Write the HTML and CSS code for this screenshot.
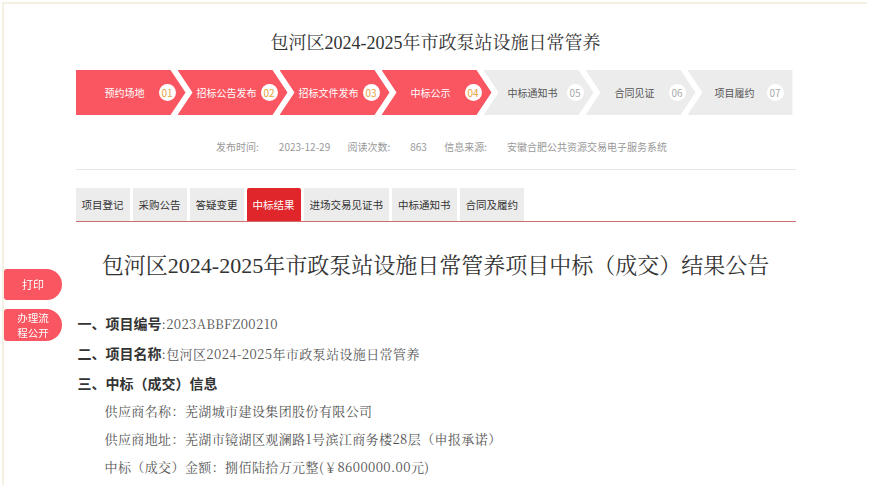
FILE: index.html
```html
<!DOCTYPE html>
<html lang="zh-CN">
<head>
  <meta charset="UTF-8" />
  <meta name="viewport" content="width=device-width, initial-scale=1.0"/>
  <title>包河区2024-2025年市政泵站设施日常管养</title>
  <link rel="stylesheet" href="styles.css">
</head>
<body>
  <div class="frame">

    <!-- 左侧悬浮按钮 -->
    <div class="side-btns">
      <a class="side-btn">打印</a>
      <a class="side-btn two-line">办理流<br>程公开</a>
    </div>

    <div class="container">
      <h1 class="page-title">包河区2024-2025年市政泵站设施日常管养</h1>

      <ul class="steps">
        <li class="step done first"><span class="step-name">预约场地</span><span class="step-no">01</span></li>
        <li class="step done"><span class="step-name">招标公告发布</span><span class="step-no">02</span></li>
        <li class="step done"><span class="step-name">招标文件发布</span><span class="step-no">03</span></li>
        <li class="step done"><span class="step-name">中标公示</span><span class="step-no">04</span></li>
        <li class="step"><span class="step-name">中标通知书</span><span class="step-no">05</span></li>
        <li class="step"><span class="step-name">合同见证</span><span class="step-no">06</span></li>
        <li class="step last"><span class="step-name">项目履约</span><span class="step-no">07</span></li>
      </ul>

      <div class="meta">
        <span class="meta-label">发布时间:</span><span class="meta-value">2023-12-29</span>
        <span class="meta-label">阅读次数:</span><span class="meta-value">863</span>
        <span class="meta-label">信息来源:</span><span class="meta-value">安徽合肥公共资源交易电子服务系统</span>
      </div>

      <div class="tabs">
        <a class="tab">项目登记</a>
        <a class="tab">采购公告</a>
        <a class="tab">答疑变更</a>
        <a class="tab active">中标结果</a>
        <a class="tab">进场交易见证书</a>
        <a class="tab">中标通知书</a>
        <a class="tab">合同及履约</a>
      </div>

      <h2 class="notice-title">包河区2024-2025年市政泵站设施日常管养项目中标（成交）结果公告</h2>

      <div class="notice-body">
        <p class="sec"><b>一、项目编号</b><span class="val">:2023ABBFZ00210</span></p>
        <p class="sec"><b>二、项目名称</b><span class="val">:包河区2024-2025年市政泵站设施日常管养</span></p>
        <p class="sec"><b>三、中标（成交）信息</b></p>
        <p class="item">供应商名称：芜湖城市建设集团股份有限公司</p>
        <p class="item">供应商地址：芜湖市镜湖区观澜路1号滨江商务楼28层（申报承诺）</p>
        <p class="item">中标（成交）金额：捌佰陆拾万元整(￥8600000.00元)</p>
        <p class="sec"><b>四、主要标的信息</b></p>
      </div>
    </div>
  </div>
</body>
</html>
```

FILE: styles.css
```css
* { box-sizing: border-box; margin: 0; padding: 0; }
html, body {
  height: 100%;
  overflow: hidden;
}
body {
  font-family: "Noto Sans CJK SC", "Noto Sans", sans-serif;
  background: #fff;
  color: #333;
  padding: 2px 2px 0;
}
.frame {
  height: 100%;
  border-top: 2px solid #f6f0e3;
  border-left: 2px solid #f6f0e3;
}
.container {
  width: 720px;
  margin: 0 auto;
}

/* 标题 */
.page-title {
  padding-top: 27px;
  text-align: center;
  font-family: "Liberation Serif", "Noto Serif CJK SC", "Noto Sans CJK SC", serif;
  font-size: 18px;
  font-weight: normal;
  line-height: 24px;
  color: #333;
}

/* 流程步骤 */
.steps {
  list-style: none;
  display: flex;
  margin-top: 15px;
  height: 45px;
}
.step {
  width: 110px;
  height: 45px;
  margin-right: -8px;
  display: flex;
  align-items: center;
  padding-left: 15px;
  background: #ececec;
  color: #555;
  font-size: 10px;
  clip-path: polygon(0 0, 95px 0, 110px 50%, 95px 100%, 0 100%, 15px 50%);
}
.step.first {
  clip-path: polygon(0 0, 95px 0, 110px 50%, 95px 100%, 0 100%);
}
.step.last {
  width: 105px;
  margin-right: 0;
  clip-path: polygon(0 0, 100% 0, 100% 100%, 0 100%, 15px 50%);
}
.step.done {
  background: #f95661;
  color: #fff;
}
.step-name {
  flex: 1;
  text-align: center;
  white-space: nowrap;
}
.step-no {
  width: 17px;
  height: 17px;
  margin-right: 10px;
  border-radius: 50%;
  background: #fff;
  color: #aaa;
  font-size: 10px;
  line-height: 17px;
  text-align: center;
}
.step.last .step-no {
  margin-right: 9px;
}
.step.done .step-no {
  color: #e6a23c;
}

/* 发布信息 */
.meta {
  margin-top: 22px;
  padding: 0 0 12px 12px;
  border-bottom: 1px solid #e6e6e6;
  text-align: center;
  font-size: 10px;
  line-height: 20px;
  color: #999;
}
.meta-label {
  margin-right: 20px;
}
.meta-value {
  margin-right: 15px;
}
.meta-value:last-child {
  margin-right: 0;
}

/* 选项卡 */
.tabs {
  display: flex;
  gap: 3px;
  margin-top: 18px;
  border-bottom: 1px solid #cf6d71;
}
.tab {
  height: 33px;
  padding: 0 6px;
  background: #ececec;
  color: #333;
  font-size: 10.5px;
  line-height: 33px;
  white-space: nowrap;
}
.tab.active {
  background: #e0262a;
  color: #fff;
  border-radius: 2px 2px 0 0;
}

/* 公告正文 */
.notice-title {
  margin-top: 29px;
  text-align: center;
  font-family: "Liberation Serif", "Noto Serif CJK SC", "Noto Sans CJK SC", serif;
  font-size: 22px;
  font-weight: normal;
  line-height: 30px;
  color: #333;
}
.notice-body {
  margin-top: 27px;
  padding-left: 2px;
}
.notice-body p {
  line-height: 28px;
  white-space: nowrap;
}
.sec b {
  font-size: 14px;
  font-weight: bold;
  color: #333;
}
.val,
.item {
  font-family: "Noto Serif CJK SC", "Liberation Serif", serif;
  font-size: 13px;
  letter-spacing: 0.4px;
  color: #555;
}
.item {
  padding-left: 27px;
}

/* 左侧悬浮按钮 */
.side-btns {
  position: fixed;
  left: 4px;
  top: 269px;
  display: flex;
  flex-direction: column;
  gap: 9px;
}
.side-btn {
  width: 58px;
  padding: 7px 0;
  background: #f95661;
  color: #fff;
  font-size: 11px;
  line-height: 17px;
  text-align: center;
  border-radius: 3px 16px 16px 3px;
}
.side-btn.two-line {
  padding: 1px 0;
  font-size: 10.5px;
  line-height: 15px;
}
```
